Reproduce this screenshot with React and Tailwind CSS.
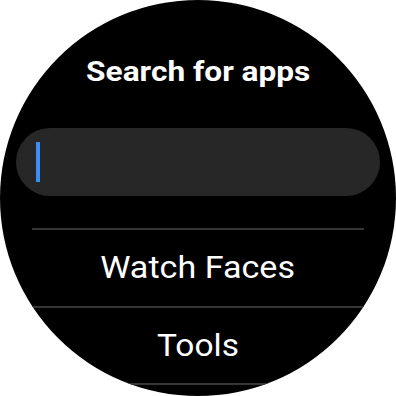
export default function App() {
  return (
    <div className="w-[396px] h-[396px] bg-white">
      <div
        className="w-[396px] h-[396px] rounded-full bg-black overflow-hidden flex flex-col items-center text-white"
        style={{ fontFamily: "Roboto, 'Noto Sans', sans-serif" }}
      >
        <div className="mt-[58px] h-[28px] leading-[28px] text-[28px] font-bold scale-x-[1.13] whitespace-nowrap">
          Search for apps
        </div>
        <div className="mt-[42px] w-[364px] h-[68px] shrink-0 rounded-full bg-[#272727] flex items-center pl-[20px]">
          <div className="w-[4px] h-[40px] bg-[#3b8ef5]" />
        </div>
        <div className="mt-[32px] w-[332px] h-[2px] shrink-0 bg-[#363636]" />
        <div className="w-[332px] h-[76px] shrink-0 flex items-center justify-center pb-[2px]">
          <span className="text-[31px] leading-[31px] scale-x-[1.1] whitespace-nowrap">Watch Faces</span>
        </div>
        <div className="w-[332px] h-[2px] shrink-0 bg-[#363636]" />
        <div className="w-[332px] h-[75px] shrink-0 flex items-center justify-center">
          <span className="text-[31px] leading-[31px] scale-x-[1.08] whitespace-nowrap">Tools</span>
        </div>
        <div className="w-[332px] h-[2px] shrink-0 bg-[#363636]" />
      </div>
    </div>
  );
}
